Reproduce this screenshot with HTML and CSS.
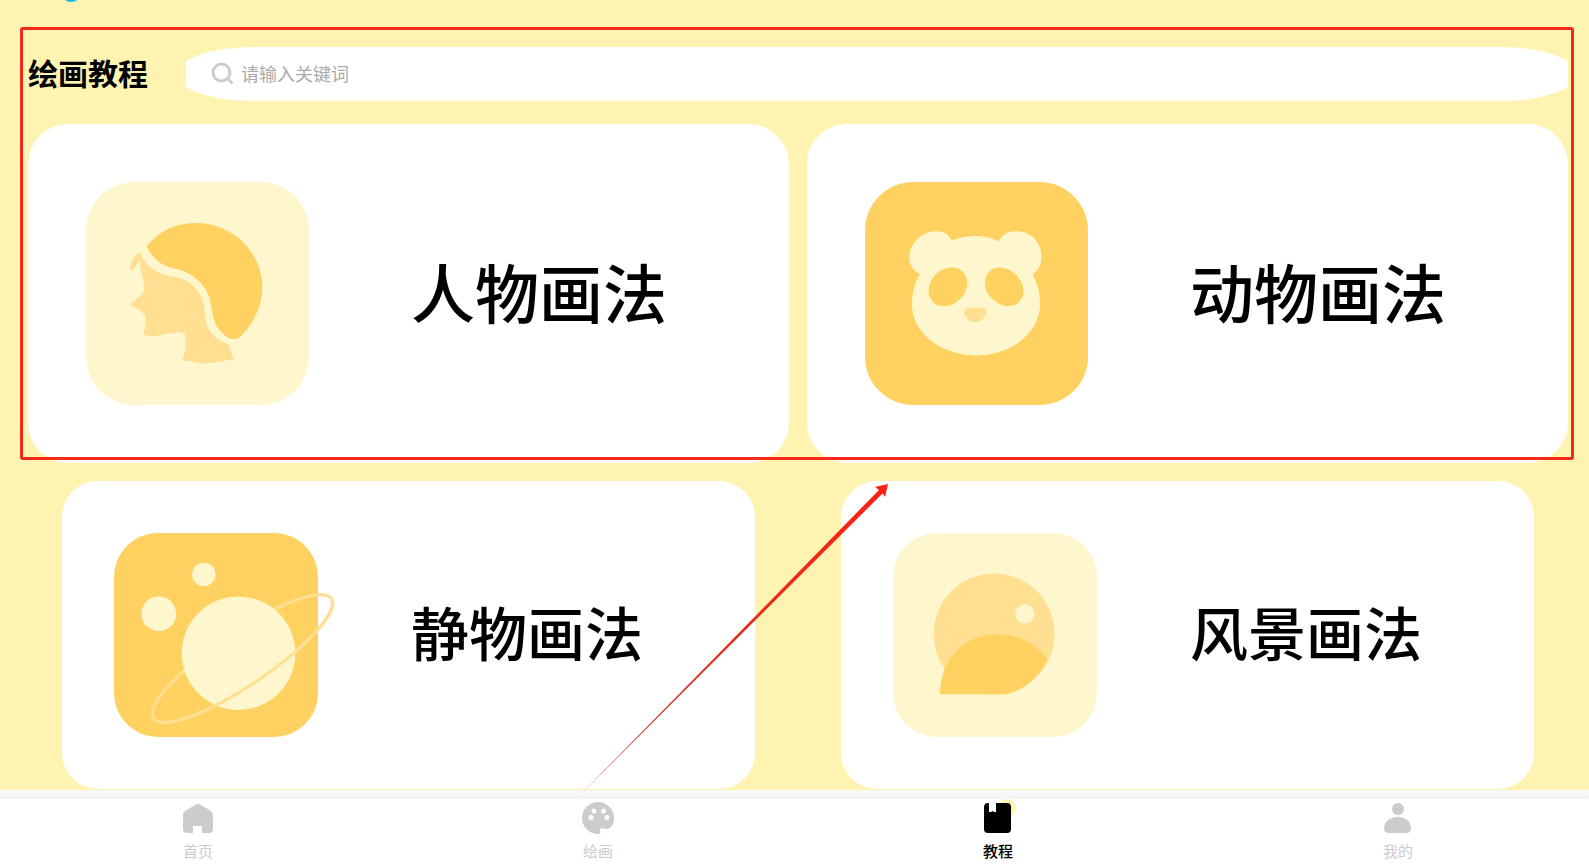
FILE: index.html
```html
<!DOCTYPE html>
<html lang="zh-CN">
<head>
    <meta charset="UTF-8">
    <meta name="viewport" content="width=device-width, initial-scale=1.0">
    <title>绘画教程</title>
    <link rel="stylesheet" href="styles.css">
</head>
<body>
    <span class="dot"></span>

    <main class="page">
        <header class="header">
            <h1>绘画教程</h1>
            <form class="search" role="search">
                <label class="search-bar">
                    <svg class="search-icon" viewBox="0 0 24 24" aria-hidden="true">
                        <circle cx="10.500" cy="10.500" r="8.500"/>
                        <path d="M16.500 16.500l5 5"/>
                    </svg>
                    <input type="search" placeholder="请输入关键词" aria-label="请输入关键词">
                </label>
            </form>
        </header>

        <div class="cards">
            <a class="card" href="#people">
                <svg class="card-icon" viewBox="48 35 670 670" aria-hidden="true">
                    <rect class="light" x="48" y="35" width="670" height="670" rx="145"/>
                    <path class="strong" d="M230 229C262 187 312 158 378 158C490 158 578 247 578 352C578 408 549 466 508 503C500 508 486 508 477 504C451 490 431 460 427 425C422 392 417 370 402 350C380 320 347 302 305 293C271 284 247 262 230 229Z"/>
                    <path class="mid" d="M180 296C182 277 193 254 209 247C216 255 220 266 228 277C246 300 275 314 312 320C346 327 373 343 389 370C399 388 403 407 406 434C410 468 416 480 436 500C449 513 463 519 477 523L492 568C458 571 433 580 406 580C380 580 360 571 337 571C345 557 347 540 346 491C322 482 298 490 278 495C255 499 237 499 222 494C221 477 230 464 227 440C217 423 198 413 180 404C193 391 212 380 222 362C223 339 218 319 213 306L210 271C200 279 198 291 185 301Z"/>
                </svg>
                <span>人物画法</span>
            </a>

            <a class="card" href="#animals">
                <svg class="card-icon" viewBox="45 35 670 670" aria-hidden="true">
                    <rect class="strong" x="45" y="35" width="670" height="670" rx="145"/>
                    <path class="light" d="M305 211C350 192 405 192 447 213C459 191 478 183 500 183C545 183 575 216 575 260C575 283 567 299 549 313C563 338 571 370 571 403C571 485 488 556 379 556C270 556 186 485 186 403C186 370 195 335 211 311C190 301 178 285 178 260C181 219 216 183 258 183C281 183 296 192 305 211Z"/>
                    <ellipse class="strong" cx="294" cy="350" rx="64" ry="52" transform="rotate(-45 294 350)"/>
                    <ellipse class="strong" cx="463" cy="350" rx="64" ry="51" transform="rotate(45 463 350)"/>
                    <path class="mid" d="M342 424C342 416 350 412 376 412C402 412 410 416 410 424C410 440 393 457 377 457C360 457 342 440 342 424Z"/>
                </svg>
                <span>动物画法</span>
            </a>

            <a class="card card-small" href="#still">
                <svg class="card-icon" viewBox="43 40 611 611" aria-hidden="true">
                    <rect class="strong" x="43" y="40" width="611" height="611" rx="132"/>
                    <circle class="light" cx="312" cy="164" r="35"/>
                    <circle class="light" cx="177" cy="282" r="52"/>
                    <ellipse class="ring" cx="428" cy="416" rx="321" ry="80" transform="rotate(-34 428 416)"/>
                    <circle class="light" cx="416" cy="400" r="170"/>
                    <path class="ring" d="M107 416A321 80 0 0 0 749 416" transform="rotate(-34 428 416)"/>
                </svg>
                <span>静物画法</span>
            </a>

            <a class="card card-small" href="#scenery">
                <svg class="card-icon" viewBox="40 40 611 611" aria-hidden="true">
                    <rect class="light" x="40" y="40" width="611" height="611" rx="132"/>
                    <circle class="mid" cx="343" cy="342" r="181"/>
                    <circle class="light" cx="435" cy="282" r="29"/>
                    <path class="strong" d="M179 523C182 495 186 470 195 445C222 384 280 343 352 343C417 344 471 374 503 420C478 470 430 515 378 523Z"/>
                </svg>
                <span>风景画法</span>
            </a>
        </div>
    </main>

    <nav class="tabs">
        <a class="tab" href="#home">
            <svg viewBox="0 0 36 36" aria-hidden="true">
                <path d="M16 4.600Q18 3.300 20 4.600L31 11Q33 12.300 33 15V29Q33 33 29 33H22V26H13V33H7Q3 33 3 29V15Q3 12.300 5 11Z"/>
            </svg>
            <span>首页</span>
        </a>
        <a class="tab" href="#draw">
            <svg viewBox="0 0 36 36" aria-hidden="true">
                <path d="M18 2A16 16 0 0 1 34 18C34 25 31 29 26 29C23 29 20 27 20 30C20 32 22 34 18 34A16 16 0 0 1 18 2Z"/>
                <g class="hole">
                    <circle cx="14" cy="11" r="2.500"/>
                    <circle cx="23.500" cy="11" r="2.500"/>
                    <circle cx="11" cy="17.500" r="2.500"/>
                    <circle cx="27" cy="17.500" r="2.500"/>
                </g>
            </svg>
            <span>绘画</span>
        </a>
        <a class="tab active" href="#course">
            <svg viewBox="0 0 36 36" aria-hidden="true">
                <circle class="badge" cx="27" cy="8" r="9"/>
                <rect x="4" y="3" width="27" height="30" rx="4"/>
                <path class="hole" d="M9 2H16V12H14L12.500 11L11 12H9Z"/>
            </svg>
            <span>教程</span>
        </a>
        <a class="tab" href="#mine">
            <svg viewBox="0 0 36 36" aria-hidden="true">
                <circle cx="18" cy="9" r="6"/>
                <path d="M4 28C4 22 10 17 18 17S31 22 31 28C31 32 28 33 26 33H9C7 33 4 32 4 28Z"/>
            </svg>
            <span>我的</span>
        </a>
    </nav>

    <!-- red annotation: frame and arrow -->
    <div class="frame"></div>
    <svg class="arrow" viewBox="0 0 307 310" aria-hidden="true">
        <defs>
            <linearGradient id="fade" x1="0" y1="1" x2="1" y2="0">
                <stop offset="0" stop-color="#c4483c"/>
                <stop offset="0.600" stop-color="#ee2a17"/>
                <stop offset="1" stop-color="#ff2012"/>
            </linearGradient>
        </defs>
        <path fill="url(#fade)" d="M0 310L298 6L294 3L307 0L304 13L301.500 9.500Z"/>
    </svg>
</body>
</html>
```
FILE: styles.css
```css
* {
    box-sizing: border-box;
}

body {
    background-color: #fef3b1;
    font-family: "Noto Sans CJK SC", sans-serif;
    margin: 0;
    min-height: 100vh;
    position: relative;
    overflow: hidden;
    color: #000;
}

a {
    color: inherit;
    text-decoration: none;
}

.dot {
    position: absolute;
    left: 60px;
    top: -20px;
    width: 22px;
    height: 22px;
    border-radius: 50%;
    background-color: #18b4ee;
}

.page {
    padding: 47px 21px 76px 28px;
}

.header {
    display: flex;
    align-items: center;
    gap: 38px;
    margin-bottom: 23px;
}

.header h1 {
    margin: 0;
    padding-bottom: 4px;
    font-size: 30px;
    line-height: 40px;
    font-weight: 700;
}

/* the bar is wider than its box, so its round ends are cut off flat */
.search {
    flex: 1;
    overflow: hidden;
}

.search-bar {
    display: flex;
    align-items: center;
    gap: 6px;
    height: 54px;
    margin: 0 -9px;
    padding: 0 34px;
    background-color: #fff;
    border-radius: 76px / 27px;
}

.search-icon {
    width: 24px;
    height: 24px;
    fill: none;
    stroke: #ccc;
    stroke-width: 3;
}

.search-bar input {
    flex: 1;
    padding: 0 0 2px;
    border: none;
    outline: none;
    background: none;
    font-family: inherit;
    font-size: 18px;
}

.search-bar input::placeholder {
    color: #aaa;
    font-weight: 400;
}

.cards {
    display: grid;
    grid-template-columns: 1fr 1fr;
    gap: 18px;
}

.card {
    display: flex;
    align-items: center;
    gap: 102px;
    padding: 58px;
    background-color: #fff;
    border-radius: 40px;
    font-size: 64px;
    line-height: 72px;
    font-weight: 500;
    white-space: nowrap;
}

.card span {
    padding-bottom: 8px;
}

.card-small {
    gap: 93px;
    margin: 0 34px;
    padding: 52px;
    border-radius: 36px;
    font-size: 58px;
}

.card-icon {
    flex: none;
    width: 223px;
    height: 223px;
    overflow: visible;
}

.card-small .card-icon {
    width: 204px;
    height: 204px;
}

.light {
    fill: #fef7cd;
}

.mid {
    fill: #ffdf91;
}

.strong {
    fill: #ffd160;
}

.ring {
    fill: none;
    stroke: #ffdf91;
    stroke-width: 9;
}

.tabs {
    position: fixed;
    left: 0;
    right: 0;
    bottom: 0;
    display: flex;
    justify-content: space-between;
    height: 76px;
    padding: 10px 173px 0 180px;
    background: linear-gradient(#fafafa, #f2f2f2) top / 100% 9px no-repeat #fff;
}

.tab {
    display: flex;
    flex-direction: column;
    align-items: center;
    gap: 5px;
    width: 36px;
    color: #ccc;
    font-size: 15px;
    line-height: 20px;
}

.tab svg {
    width: 36px;
    height: 36px;
    fill: currentColor;
    overflow: visible;
}

.tab .hole {
    fill: #fff;
}

.tab .badge {
    fill: #fef3b1;
}

.tab.active {
    color: #000;
    font-weight: 500;
}

.frame {
    position: absolute;
    left: 20px;
    right: 15px;
    top: 27px;
    height: 433px;
    border: 3px solid #f42a18;
    border-radius: 3px;
    pointer-events: none;
}

.arrow {
    position: absolute;
    left: 581px;
    top: 484px;
    width: 307px;
    height: 310px;
    pointer-events: none;
}
```
